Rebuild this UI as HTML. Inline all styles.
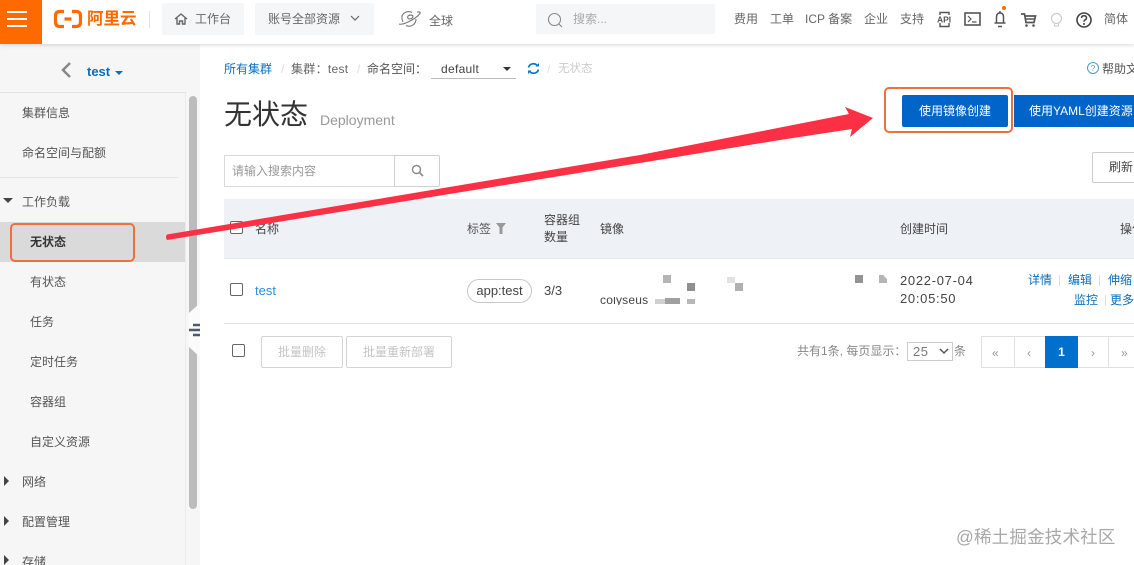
<!DOCTYPE html>
<html lang="zh"><head><meta charset="utf-8"><title>无状态</title>
<style>
*{box-sizing:border-box}
html,body{margin:0;padding:0;width:1134px;height:565px;overflow:hidden;background:#fff}
body{position:relative;font-family:"Liberation Sans","Noto Sans CJK SC",sans-serif;font-size:12px;color:#555}
.t{position:absolute;white-space:nowrap;line-height:16px}
.b{position:absolute}
.side{color:#555}
.link{color:#0a6ebd}
.gray{color:#999}
.dis{color:#bbb}
.px{position:absolute;background:#aaa}
.btn{position:absolute;background:#fff;border:1px solid #d4d4d4;border-radius:2px;text-align:center;white-space:nowrap}
</style></head><body>

<!-- sidebar -->
<div class="b" style="left:0;top:44px;width:200px;height:521px;background:#f6f6f6"></div>
<div class="b" style="left:185px;top:92px;width:1px;height:473px;background:#ebebeb"></div>
<div class="b" style="left:0;top:92px;width:186px;height:1px;background:#e4e4e4"></div>
<div class="b" style="left:0;top:177px;width:178px;height:1px;background:#e4e4e4"></div>
<div class="b" style="left:189px;top:96px;width:8px;height:413px;border-radius:4px;background:#bcbcbc"></div>
<svg class="b" style="left:58px;top:60px" width="16" height="20"><path d="M12 3 L5 10 L12 17" fill="none" stroke="#888" stroke-width="2.500"/></svg>
<div class="t link" style="left:87px;top:64px;font-weight:bold;font-size:13px">test</div>
<svg class="b" style="left:114px;top:70px" width="10" height="6"><path d="M1 1 H9 L5 5Z" fill="#0a6ebd"/></svg>

<div class="t side" style="left:22px;top:105px">集群信息</div>
<div class="t side" style="left:22px;top:145px">命名空间与配额</div>
<div class="t side" style="left:22px;top:194px">工作负载</div>
<svg class="b" style="left:2px;top:197px" width="12" height="8"><path d="M1 1 H11 L6 6Z" fill="#444"/></svg>
<div class="b" style="left:0;top:222px;width:185px;height:40px;background:#dadada"></div>
<div class="t" style="left:30px;top:234px;font-weight:bold;color:#333">无状态</div>
<div class="t side" style="left:30px;top:274px">有状态</div>
<div class="t side" style="left:30px;top:314px">任务</div>
<div class="t side" style="left:30px;top:354px">定时任务</div>
<div class="t side" style="left:30px;top:394px">容器组</div>
<div class="t side" style="left:30px;top:434px">自定义资源</div>
<div class="t side" style="left:22px;top:474px">网络</div>
<div class="t side" style="left:22px;top:514px">配置管理</div>
<div class="t side" style="left:22px;top:554px">存储</div>
<svg class="b" style="left:3px;top:475px" width="8" height="12"><path d="M1 1 V11 L6 6Z" fill="#444"/></svg>
<svg class="b" style="left:3px;top:515px" width="8" height="12"><path d="M1 1 V11 L6 6Z" fill="#444"/></svg>
<svg class="b" style="left:3px;top:555px" width="8" height="10"><path d="M1 0 V10 L6 5Z" fill="#444"/></svg>
<!-- collapse handle -->
<svg class="b" style="left:186px;top:303px" width="14" height="54"><path d="M14 0 V54 L3 44 V10Z" fill="#fbfbfb"/><path d="M7 22 H14 M3 27 H14 M7 32 H14" stroke="#4f5a70" stroke-width="2.600"/></svg>

<!-- header -->
<div class="b" style="left:0;top:0;width:1134px;height:44px;background:#fff;box-shadow:0 1px 4px rgba(0,0,0,.16)"></div>
<div class="b" style="left:0;top:0;width:42px;height:44px;background:#ff6a00"></div>
<svg class="b" style="left:0;top:0" width="42" height="44"><path d="M7 12H27M7 19H27M7 26H27" stroke="#fff" stroke-width="2"/></svg>
<svg class="b" style="left:53px;top:9px" width="30" height="20"><path d="M11 2.500 H7 Q2.500 2.500 2.500 7 V13 Q2.500 17.500 7 17.500 H11 M19 2.500 H23 Q27.500 2.500 27.500 7 V13 Q27.500 17.500 23 17.500 H19 M11.500 10 H18.500" fill="none" stroke="#ff6a00" stroke-width="3.200"/></svg>
<div class="t" style="left:87px;top:9px;font-size:16.500px;font-weight:bold;color:#ff6a00;line-height:20px;letter-spacing:0">阿里云</div>
<div class="b" style="left:149px;top:11px;width:1px;height:17px;background:#e3e3e3"></div>
<div class="b" style="left:162px;top:3px;width:82px;height:32px;background:#f5f6f7;border-radius:2px"></div>
<svg class="b" style="left:174px;top:12px" width="14" height="14"><path d="M1 7 L7 2 L13 7 M3 6 V12 H5.500 V9 H8.500 V12 H11 V6" fill="none" stroke="#666" stroke-width="1.400"/></svg>
<div class="t" style="left:195px;top:11px;color:#666">工作台</div>
<div class="b" style="left:255px;top:3px;width:119px;height:32px;background:#f5f6f7;border-radius:2px"></div>
<div class="t" style="left:268px;top:11px;color:#666">账号全部资源</div>
<svg class="b" style="left:350px;top:15px" width="10" height="7"><path d="M1 1 L5 5 L9 1" fill="none" stroke="#666" stroke-width="1.200"/></svg>
<svg class="b" style="left:398px;top:9px" width="24" height="20"><path d="M14 3.500 A7 7 0 0 0 4 7 Q3.500 10 5 13 M18 10 A7 7 0 0 1 8 16.500" fill="none" stroke="#777" stroke-width="1.100"/><path d="M1 15 Q4 16 10 13 Q18 9.500 22 4.500 Q23 2.500 19 3 M10 7 Q13 5 15 7 Q15 10 11 10 Q9 9 10 7Z" fill="none" stroke="#777" stroke-width="1.100"/></svg>
<div class="t" style="left:429px;top:13px;color:#666">全球</div>
<div class="b" style="left:536px;top:4px;width:179px;height:30px;background:#f5f6f7;border-radius:2px"></div>
<svg class="b" style="left:547px;top:12px" width="16" height="16"><circle cx="7.500" cy="7.500" r="6" fill="none" stroke="#888" stroke-width="1.100"/><path d="M12 12 L15 15" stroke="#888" stroke-width="1.100"/></svg>
<div class="t" style="left:573px;top:11px;color:#aaa">搜索...</div>
<div class="t" style="left:734px;top:11px;color:#666">费用</div>
<div class="t" style="left:770px;top:11px;color:#666">工单</div>
<div class="t" style="left:805px;top:11px;color:#666">ICP 备案</div>
<div class="t" style="left:864px;top:11px;color:#666">企业</div>
<div class="t" style="left:900px;top:11px;color:#666">支持</div>
<svg class="b" style="left:936px;top:10px" width="18" height="18"><path d="M4 5 V2.500 H13 V5 M4 13 V16.500 H13 V13" fill="none" stroke="#555" stroke-width="1.400"/><text x="1" y="12.500" font-size="8.500" font-weight="bold" fill="#555" font-family="Liberation Sans">API</text></svg>
<svg class="b" style="left:964px;top:12px" width="17" height="14"><rect x="1" y="1" width="15" height="12" fill="none" stroke="#555" stroke-width="1.600"/><path d="M4 4 L7 7 L4 10 M8 10 H12.500" fill="none" stroke="#555" stroke-width="1.200"/></svg>
<svg class="b" style="left:992px;top:5px" width="16" height="24"><circle cx="12" cy="3" r="2" fill="#ff6a00"/><path d="M2.500 18 H13.500 M4.500 18 V12 Q4.500 8 8 8 Q11.500 8 11.500 12 V18 M8 6 V8 M6 21.500 H10" fill="none" stroke="#555" stroke-width="1.500"/></svg>
<svg class="b" style="left:1020px;top:12px" width="17" height="16"><path d="M1 2 H4.500 L6 10.500 H14 L15.500 4 H5" fill="none" stroke="#555" stroke-width="1.700"/><path d="M6 7 H15" stroke="#555" stroke-width="1.500"/><circle cx="6.500" cy="13.500" r="1.300" fill="#555"/><circle cx="13.500" cy="13.500" r="1.300" fill="#555"/></svg>
<svg class="b" style="left:1050px;top:12px" width="14" height="17"><circle cx="6.500" cy="6.500" r="5" fill="none" stroke="#ccc" stroke-width="1.200"/><path d="M4.500 12 V14 H8.500 V12" fill="none" stroke="#ccc" stroke-width="1.100"/></svg>
<svg class="b" style="left:1075px;top:11px" width="18" height="18"><circle cx="9" cy="9" r="7" fill="none" stroke="#444" stroke-width="1.600"/><path d="M6.500 7 Q6.500 4.800 9 4.800 Q11.500 4.800 11.500 7 Q11.500 8.300 9.800 9 Q9 9.400 9 10.800" fill="none" stroke="#444" stroke-width="1.500"/><circle cx="9" cy="13" r="1" fill="#444"/></svg>
<div class="t" style="left:1104px;top:11px;color:#666">简体</div>

<!-- breadcrumb -->
<div class="t link" style="left:224px;top:61px">所有集群</div>
<div class="t" style="left:281px;top:61px;color:#ddd">/</div>
<div class="t" style="left:291px;top:61px;color:#666;letter-spacing:.3px">集群：test</div>
<div class="t" style="left:357px;top:61px;color:#ddd">/</div>
<div class="t" style="left:367px;top:61px;color:#555">命名空间：</div>
<div class="t" style="left:441px;top:61px;color:#444;letter-spacing:.3px">default</div>
<div class="b" style="left:431px;top:78px;width:85px;height:1px;background:#bbb"></div>
<svg class="b" style="left:502px;top:66px" width="10" height="6"><path d="M1 1 H9 L5 5Z" fill="#333"/></svg>
<svg class="b" style="left:527px;top:62px" width="13" height="13"><path d="M1.500 5.500 A5 5 0 0 1 10.500 4 M11.500 7.500 A5 5 0 0 1 2.500 9" fill="none" stroke="#0a7ac4" stroke-width="1.700"/><path d="M8.500 4.500 H12 V1Z M4.500 8.500 H1 V12Z" fill="#0a7ac4"/></svg>
<div class="t" style="left:547px;top:61px;color:#e3e3e3">/</div>
<div class="t" style="left:558px;top:61px;color:#ccc;font-size:11.500px">无状态</div>
<svg class="b" style="left:1086px;top:61px" width="14" height="14"><circle cx="7" cy="7" r="5.500" fill="none" stroke="#4a9ed8"/><text x="7" y="10" font-size="8" text-anchor="middle" fill="#4a9ed8" font-family="Liberation Sans">?</text></svg>
<div class="t" style="left:1102px;top:61px;color:#555">帮助文档</div>

<!-- title -->
<div class="t" style="left:224px;top:98px;font-size:28px;line-height:34px;color:#333">无状态</div>
<div class="t" style="left:320px;top:111px;font-size:14px;line-height:18px;color:#999">Deployment</div>

<div class="b" style="left:902px;top:95px;width:106px;height:32px;background:#0064c8;border-radius:2px;color:#fff;text-align:center;line-height:32px">使用镜像创建</div>
<div class="b" style="left:1014px;top:95px;width:130px;height:32px;background:#0064c8;color:#fff;padding-left:15px;line-height:32px;white-space:nowrap">使用YAML创建资源</div>
<div class="b" style="left:884px;top:87px;width:129px;height:46px;border:2.500px solid #f0703c;border-radius:5px"></div>

<!-- search -->
<div class="b" style="left:224px;top:155px;width:171px;height:32px;border:1px solid #d9d9d9"></div>
<div class="t" style="left:232px;top:163px;color:#999">请输入搜索内容</div>
<div class="b" style="left:394px;top:155px;width:46px;height:32px;border:1px solid #d0d0d0;border-radius:0 2px 2px 0"></div>
<svg class="b" style="left:411px;top:164px" width="14" height="14"><circle cx="5.500" cy="5.500" r="4" fill="none" stroke="#888" stroke-width="1.400"/><path d="M8.500 8.500 L12 12" stroke="#888" stroke-width="1.600"/></svg>
<div class="btn" style="left:1092px;top:152px;width:60px;height:31px;line-height:29px;color:#444;text-align:left;padding-left:16px;border-color:#ccc">刷新</div>

<!-- table -->
<div class="b" style="left:224px;top:199px;width:910px;height:60px;background:#eef1f6;border-bottom:1px solid #e3e6eb"></div>
<div class="b" style="left:230px;top:221px;width:13px;height:13px;border:1px solid #666;border-radius:2px;background:#fff"></div>
<div class="t" style="left:255px;top:221px;color:#444">名称</div>
<div class="t" style="left:467px;top:221px;color:#555">标签</div>
<svg class="b" style="left:495px;top:222px" width="12" height="13"><path d="M1 1 H11 L7.500 5.500 V12 H4.500 V5.500Z" fill="#999"/></svg>
<div class="t" style="left:544px;top:212px;color:#444">容器组</div>
<div class="t" style="left:544px;top:229px;color:#444">数量</div>
<div class="t" style="left:600px;top:221px;color:#444">镜像</div>
<div class="t" style="left:900px;top:221px;color:#444">创建时间</div>
<div class="t" style="left:1120px;top:221px;color:#444">操作</div>

<div class="b" style="left:230px;top:283px;width:13px;height:13px;border:1px solid #666;border-radius:2px;background:#fff"></div>
<div class="t" style="left:255px;top:283px;color:#2a8fdc;font-size:13px">test</div>
<div class="b" style="left:467px;top:279px;width:65px;height:24px;border:1px solid #c8c8c8;border-radius:12px;text-align:center;line-height:22px;color:#444;font-size:13px">app:test</div>
<div class="t" style="left:544px;top:283px;color:#444;font-size:13px">3/3</div>
<div class="b" style="left:600px;top:297px;width:50px;height:8px;overflow:hidden"><div class="t" style="left:0;top:-5px;color:#444;font-size:12px;letter-spacing:.2px">colyseus</div></div>
<div class="px" style="left:663px;top:275px;width:8px;height:8px;background:#b4b4b4"></div>
<div class="px" style="left:687px;top:283px;width:8px;height:8px;background:#8f8f8f"></div>
<div class="px" style="left:687px;top:299px;width:8px;height:5px;background:#b8b8b8"></div>
<div class="px" style="left:655px;top:299px;width:10px;height:5px;background:#d0d0d0"></div>
<div class="px" style="left:665px;top:298px;width:15px;height:6px;background:#a0a0a0"></div>
<div class="px" style="left:727px;top:277px;width:8px;height:6px;background:#e2e2e2"></div>
<div class="px" style="left:735px;top:283px;width:8px;height:8px;background:#b0b0b0"></div>
<div class="px" style="left:855px;top:275px;width:8px;height:8px;background:#939393"></div>
<svg class="b" style="left:879px;top:275px" width="8" height="8"><path d="M0 0 H4 L8 4 V8 H0Z" fill="#b4b4b4"/></svg>
<div class="t" style="left:900px;top:273px;color:#444;font-size:13px;letter-spacing:.7px">2022-07-04</div>
<div class="t" style="left:900px;top:291px;color:#444;font-size:13px;letter-spacing:.7px">20:05:50</div>
<div class="t link" style="left:1028px;top:272px">详情</div>
<div class="b" style="left:1059px;top:275px;width:1px;height:11px;background:#ddd"></div>
<div class="t link" style="left:1068px;top:272px">编辑</div>
<div class="b" style="left:1099px;top:275px;width:1px;height:11px;background:#ddd"></div>
<div class="t link" style="left:1108px;top:272px">伸缩</div>
<div class="t link" style="left:1074px;top:292px">监控</div>
<div class="b" style="left:1105px;top:295px;width:1px;height:11px;background:#ddd"></div>
<div class="t link" style="left:1110px;top:292px">更多</div>
<div class="b" style="left:224px;top:323px;width:910px;height:1px;background:#e3e3e3"></div>

<!-- footer -->
<div class="b" style="left:232px;top:344px;width:13px;height:13px;border:1px solid #666;border-radius:2px"></div>
<div class="btn" style="left:261px;top:336px;width:82px;height:32px;line-height:30px;color:#c4c4c4">批量删除</div>
<div class="btn" style="left:346px;top:336px;width:106px;height:32px;line-height:30px;color:#c4c4c4">批量重新部署</div>
<div class="t" style="left:797px;top:343px;color:#888">共有1条, 每页显示：</div>
<div class="b" style="left:907px;top:342px;width:46px;height:19px;border:1px solid #ccc;color:#777;padding-left:5px;line-height:18px;font-size:13px;letter-spacing:.5px">25</div>
<svg class="b" style="left:939px;top:348px" width="10" height="7"><path d="M1 1 L5 5 L9 1" fill="none" stroke="#555" stroke-width="1.500"/></svg>
<div class="t" style="left:954px;top:343px;color:#888">条</div>
<div class="b" style="left:981px;top:336px;width:153px;height:32px;border:1px solid #e0e0e0;border-right:0"></div>
<div class="b" style="left:1014px;top:336px;width:1px;height:32px;background:#e0e0e0"></div>
<div class="b" style="left:1108px;top:336px;width:1px;height:32px;background:#e0e0e0"></div>
<div class="b" style="left:1045px;top:336px;width:33px;height:32px;background:#0070cc;color:#fff;text-align:center;line-height:33px;font-weight:bold">1</div>
<div class="t" style="left:992px;top:345px;color:#999">«</div>
<div class="t" style="left:1027px;top:345px;color:#999">‹</div>
<div class="t" style="left:1091px;top:345px;color:#999">›</div>
<div class="t" style="left:1121px;top:345px;color:#999">»</div>

<!-- watermark -->
<div class="t" style="left:956px;top:526px;font-size:17.500px;line-height:22px;color:#a8a8a8;letter-spacing:.2px">@稀土掘金技术社区</div>

<!-- annotations -->
<div class="b" style="left:10px;top:223px;width:125px;height:39px;border:2.500px solid #f0703c;border-radius:5px"></div>
<svg class="b" style="left:0;top:0" width="1134" height="565"><path d="M873 118 L845 107 L849 114 L640 155 L167 234.500 Q165 237 167 240 L640 163 L780 140 L852 129 L850 137Z" fill="#fb3044"/></svg>
</body></html>
